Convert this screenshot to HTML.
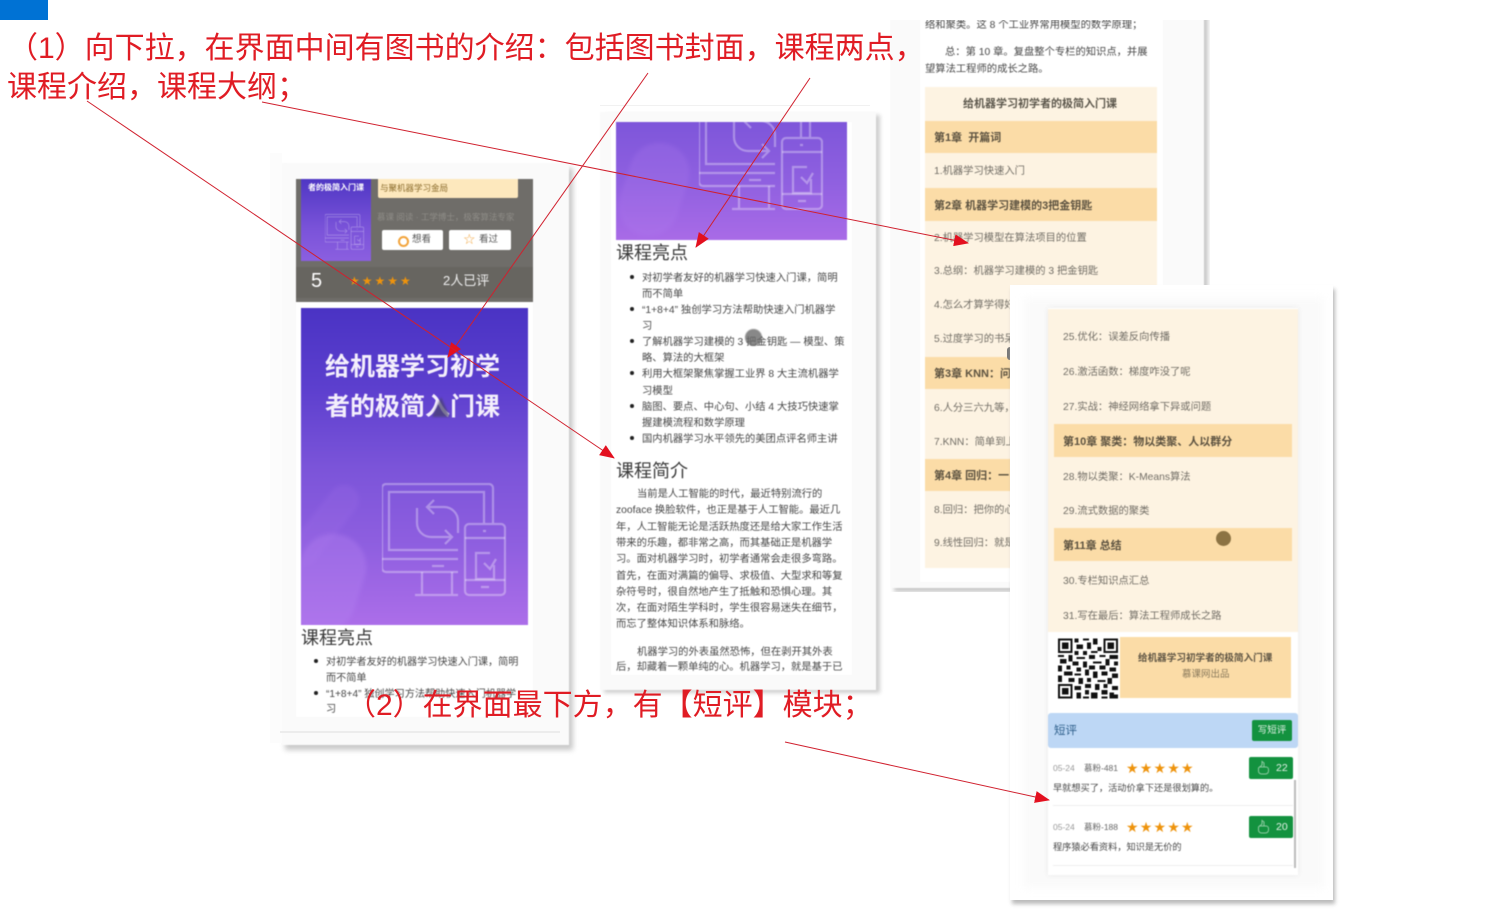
<!DOCTYPE html>
<html lang="zh-CN"><head><meta charset="utf-8"><title>课程介绍</title>
<style>
html,body{margin:0;padding:0;background:#fff}
body{width:1498px;height:917px;position:relative;overflow:hidden;font-family:"Liberation Sans","Noto Sans CJK SC",sans-serif;color:#444}
.a{position:absolute}
.t{position:absolute;white-space:nowrap;font-size:10.3px;line-height:16px;color:#484848}
.h{position:absolute;white-space:nowrap;font-size:18px;line-height:24px;color:#3a3a3a}
.b{position:absolute;width:4px;height:4px;border-radius:50%;background:#222}
.red{position:absolute;white-space:nowrap;font-size:30px;line-height:39px;color:#e01c24;font-family:"Liberation Sans","Noto Sans CJK SC",sans-serif;z-index:20}
.card{position:absolute;background:#fafafa;filter:blur(.5px)}
.s2 .t{margin-top:2px}
.row{position:absolute;height:16px;white-space:nowrap;font-size:10.3px;line-height:16px;color:#726e66}
.ch{position:absolute;background:#fbdca7;white-space:nowrap;font-size:11px;font-weight:700;color:#5c5240}
.c4row .row{margin-top:2px}
.star{position:absolute;white-space:nowrap;color:#ee930c;font-family:"DejaVu Sans",sans-serif;line-height:14px}
</style></head><body>
<svg width="0" height="0" style="position:absolute"><defs>
<symbol id="dev" viewBox="0 0 124 114" overflow="visible"><g fill="none" stroke="#fff" stroke-width="2.2" stroke-opacity=".33">
<path d="M111 40V5a4 4 0 0 0-4-4H4a4 4 0 0 0-4 4V85a4 4 0 0 0 4 4H76"/>
<path d="M102 40V9H7V67H76"/><path d="M0 76H76"/><path d="M50 83H62"/><path d="M40 89V112M70 89V112M33 112H76"/>
<rect x="83" y="41" width="40" height="71" rx="4"/><path d="M83 55H123M83 97H123M99 104H107M101 48H104"/>
<path d="M108 70H94V96H112V82M102 80L108 86L114 76"/>
<path d="M45 24H62a14 14 0 0 1 14 14V50M52 17L45 24L52 31"/><path d="M35 25V40a14 14 0 0 0 14 14H70M63 47L70 54L63 61"/>
</g></symbol></defs></svg>

<div class="a" style="left:0;top:0;width:48px;height:20px;background:#0072d4"></div>

<!-- card 1 -->
<div class="card" style="left:281px;top:163px;width:288px;height:582px;box-shadow:4px 5px 5px #c9c9c9"></div>
<div class="a" style="left:270px;top:153px;width:12px;height:590px;background:#fcfcfc"></div>
<div class="a" style="left:280px;top:731px;width:280px;height:2px;background:#ececec"></div>
<div class="card" style="left:296px;top:179px;width:237px;height:538px;background:#fff">
 <div class="a" style="left:0;top:0;width:237px;height:123px;background:#6f6d69"></div>
 <div class="a" style="left:5px;top:0;width:70px;height:82px;background:linear-gradient(#4f37c4,#7a53d9 60%,#8b5fe0)">
  <svg class="a" style="left:24px;top:34px" width="39" height="38"><use href="#dev" width="39" height="38"/></svg>
  <div class="t" style="left:7px;top:1px;font-size:8px;font-weight:700;color:#fff">者的极简入门课</div></div>
 <div class="a" style="left:82px;top:0;width:140px;height:19px;background:#fde8bd;border-radius:0 0 2px 2px"></div>
 <div class="t" style="left:84px;top:1px;font-size:8.5px;color:#8c6d2e">与聚机器学习金局</div>
 <div class="t" style="left:81px;top:30px;font-size:8.5px;color:#8e8c87">慕课 阅读 · 工学博士，极客算法专家</div>
 <div class="a" style="left:86px;top:51px;width:61px;height:20px;background:#fff;border-radius:2px"></div>
 <div class="a" style="left:153px;top:51px;width:62px;height:20px;background:#fff;border-radius:2px"></div>
 <div class="a" style="left:102px;top:57px;width:7px;height:7px;border:2px solid #f2a33a;border-radius:50%"></div>
 <div class="t" style="left:116px;top:53px;font-size:9.5px;color:#555">想看</div>
 <div class="star" style="left:167px;top:54px;font-size:14px;color:#f2a33a">☆</div>
 <div class="t" style="left:183px;top:53px;font-size:9.5px;color:#555">看过</div>
 <div class="a" style="left:0;top:88px;width:237px;height:31px;background:#676560"></div>
 <div class="t" style="left:15px;top:90px;font-size:20px;line-height:24px;color:#fff">5</div>
 <div class="star" style="left:53px;top:95px;font-size:12px;letter-spacing:2px">★★★★★</div>
 <div class="t" style="left:147px;top:94px;font-size:13px;color:#eee">2人已评</div>
 <div class="a" style="left:5px;top:129px;width:227px;height:317px;background:linear-gradient(#4a33c4 0,#5c3fce 25%,#7b54d9 50%,#8f5fe0 75%,#ac6ee9 100%);overflow:hidden">
  <div class="a" style="left:-6px;top:225px;width:66px;height:100px;border-radius:33px;background:#b27ff0;opacity:.4;transform:rotate(18deg);filter:blur(2px)"></div>
  <div class="a" style="left:8px;top:170px;width:30px;height:95px;border-radius:15px;background:#b27ff0;opacity:.14;transform:rotate(38deg);filter:blur(2px)"></div>
  <svg class="a" style="left:81px;top:175px" width="124" height="114"><use href="#dev" width="124" height="114"/></svg>
 </div>
 <div class="t" style="left:29px;top:168px;font-size:25px;line-height:40px;font-weight:700;color:#f4effc">给机器学习初学<br>者的极简入门课</div>
 <div class="h" style="left:5px;top:447px">课程亮点</div>
 <div class="b" style="left:18px;top:480px"></div>
 <div class="t" style="left:30px;top:476px;font-size:10.15px">对初学者友好的机器学习快速入门课，简明</div>
 <div class="t" style="left:30px;top:492px;font-size:10.15px">而不简单</div>
 <div class="b" style="left:18px;top:512px"></div>
 <div class="t" style="left:30px;top:508px;font-size:10.15px">“1+8+4” 独创学习方法帮助快速入门机器学</div>
 <div class="t" style="left:30px;top:523px;font-size:10.15px">习</div>
</div>
<div class="a" style="left:432px;top:397px;width:0;height:0;border-left:9px solid transparent;border-right:9px solid transparent;border-bottom:20px solid #45406a;opacity:.7;filter:blur(1px)"></div>

<!-- card 2 -->
<div class="a" style="left:600px;top:105px;width:270px;height:1px;background:#f1f1f1"></div>
<div class="card" style="left:600px;top:112px;width:276px;height:578px;box-shadow:4px 3px 4px #cfcfcf"></div>
<div class="card s2" style="left:611px;top:122px;width:241px;height:553px;background:#fff">
 <div class="a" style="left:5px;top:0;width:231px;height:118px;background:linear-gradient(#7e56da,#8f60e0 50%,#a96be7);overflow:hidden">
  <div class="a" style="left:8px;top:20px;width:60px;height:95px;border-radius:30px;background:#b27ff0;opacity:.22;transform:rotate(18deg);filter:blur(2px)"></div>
  <svg class="a" style="left:83px;top:-25px" width="124" height="114"><use href="#dev" width="124" height="114"/></svg>
 </div>
 <div class="h" style="left:5px;top:119px">课程亮点</div>
 <div class="b" style="left:19px;top:153px"></div><div class="t" style="left:31px;top:147px">对初学者友好的机器学习快速入门课，简明</div>
 <div class="t" style="left:31px;top:163px">而不简单</div>
 <div class="b" style="left:19px;top:185px"></div><div class="t" style="left:31px;top:179px">“1+8+4” 独创学习方法帮助快速入门机器学</div>
 <div class="t" style="left:31px;top:195px">习</div>
 <div class="b" style="left:19px;top:217px"></div><div class="t" style="left:31px;top:211px">了解机器学习建模的 3 把金钥匙 — 模型、策</div>
 <div class="t" style="left:31px;top:227px">略、算法的大框架</div>
 <div class="b" style="left:19px;top:249px"></div><div class="t" style="left:31px;top:243px">利用大框架聚焦掌握工业界 8 大主流机器学</div>
 <div class="t" style="left:31px;top:260px">习模型</div>
 <div class="b" style="left:19px;top:282px"></div><div class="t" style="left:31px;top:276px">脑图、要点、中心句、小结 4 大技巧快速掌</div>
 <div class="t" style="left:31px;top:292px">握建模流程和数学原理</div>
 <div class="b" style="left:19px;top:314px"></div><div class="t" style="left:31px;top:308px">国内机器学习水平领先的美团点评名师主讲</div>
 <div class="h" style="left:5px;top:337px">课程简介</div>
 <div class="t" style="left:26px;top:363px">当前是人工智能的时代，最近特别流行的</div>
 <div class="t" style="left:5px;top:379px">zooface 换脸软件，也正是基于人工智能。最近几</div>
 <div class="t" style="left:5px;top:396px">年，人工智能无论是活跃热度还是给大家工作生活</div>
 <div class="t" style="left:5px;top:412px">带来的乐趣，都非常之高，而其基础正是机器学</div>
 <div class="t" style="left:5px;top:428px">习。面对机器学习时，初学者通常会走很多弯路。</div>
 <div class="t" style="left:5px;top:445px">首先，在面对满篇的偏导、求极值、大型求和等复</div>
 <div class="t" style="left:5px;top:461px">杂符号时，很自然地产生了抵触和恐惧心理。其</div>
 <div class="t" style="left:5px;top:477px">次，在面对陌生学科时，学生很容易迷失在细节，</div>
 <div class="t" style="left:5px;top:493px">而忘了整体知识体系和脉络。</div>
 <div class="t" style="left:26px;top:521px">机器学习的外表虽然恐怖，但在剥开其外表</div>
 <div class="t" style="left:5px;top:536px">后，却藏着一颗单纯的心。机器学习，就是基于已</div>
</div>
<div class="a" style="left:745px;top:329px;width:17px;height:17px;border-radius:50%;background:#6b6b6b;opacity:.8;filter:blur(.7px)"></div>

<!-- card 3 -->
<div class="a" style="left:890px;top:20px;width:320px;height:572px;overflow:hidden">
 <div class="card" style="left:0;top:-20px;width:314px;height:588px;box-shadow:4px 4px 4px #c9c9c9"></div>
 <div class="card" style="left:30px;top:-20px;width:243px;height:582px;background:#fff">
  <div class="t" style="left:5px;top:18px">络和聚类。这 8 个工业界常用模型的数学原理；</div>
  <div class="t" style="left:25px;top:45px">总：第 10 章。复盘整个专栏的知识点，并展</div>
  <div class="t" style="left:5px;top:62px">望算法工程师的成长之路。</div>
  <div class="a" style="left:5px;top:87px;width:232px;height:481px;background:#fdf3e2"></div>
  <div class="t" style="left:43px;top:95px;font-size:11px;line-height:18px;font-weight:700;color:#5c574c">给机器学习初学者的极简入门课</div>
  <div class="ch" style="left:5px;top:121px;width:223px;height:32px;line-height:35px;padding-left:9px">第1章&nbsp; 开篇词</div>
  <div class="row" style="left:14px;top:164px">1.机器学习快速入门</div>
  <div class="ch" style="left:5px;top:188px;width:223px;height:33px;line-height:36px;padding-left:9px">第2章 机器学习建模的3把金钥匙</div>
  <div class="row" style="left:14px;top:231px">2.机器学习模型在算法项目的位置</div>
  <div class="row" style="left:14px;top:264px">3.总纲：机器学习建模的 3 把金钥匙</div>
  <div class="row" style="left:14px;top:298px">4.怎么才算学得好</div>
  <div class="row" style="left:14px;top:332px">5.过度学习的书呆子</div>
  <div class="ch" style="left:5px;top:357px;width:223px;height:32px;line-height:35px;padding-left:9px">第3章 KNN：问</div>
  <div class="row" style="left:14px;top:401px">6.人分三六九等，</div>
  <div class="row" style="left:14px;top:435px">7.KNN：简单到上</div>
  <div class="ch" style="left:5px;top:459px;width:223px;height:32px;line-height:35px;padding-left:9px">第4章 回归：一</div>
  <div class="row" style="left:14px;top:503px">8.回归：把你的心</div>
  <div class="row" style="left:14px;top:536px">9.线性回归：就是</div>
 </div>
</div>
<div class="a" style="left:1007px;top:347px;width:3px;height:13px;background:#777;border-radius:3px 0 0 3px"></div>

<!-- card 4 -->
<div class="a" style="left:1010px;top:285px;width:323px;height:615px;background:#fff;box-shadow:2px 4px 4px #bbb;z-index:5"></div>
<div class="a" style="left:1024px;top:298px;width:300px;height:590px;background:#fafafa;filter:blur(4px);z-index:5"></div>
<div class="card c4row" style="left:1048px;top:308px;width:250px;height:567px;background:#fff;z-index:6;box-shadow:0 0 5px #e8e8e8">
 <div class="a" style="left:0;top:1px;width:250px;height:323px;background:#fdf3e2"></div>
 <div class="row" style="left:15px;top:20px">25.优化：误差反向传播</div>
 <div class="row" style="left:15px;top:55px">26.激活函数：梯度咋没了呢</div>
 <div class="row" style="left:15px;top:90px">27.实战：神经网络拿下异或问题</div>
 <div class="ch" style="left:6px;top:116px;width:229px;height:33px;line-height:36px;padding-left:9px">第10章 聚类：物以类聚、人以群分</div>
 <div class="row" style="left:15px;top:160px">28.物以类聚：K-Means算法</div>
 <div class="row" style="left:15px;top:194px">29.流式数据的聚类</div>
 <div class="ch" style="left:6px;top:220px;width:229px;height:33px;line-height:36px;padding-left:9px">第11章 总结</div>
 <div class="a" style="left:168px;top:223px;width:15px;height:15px;border-radius:50%;background:#8c7343"></div>
 <div class="row" style="left:15px;top:264px">30.专栏知识点汇总</div>
 <div class="row" style="left:15px;top:299px">31.写在最后：算法工程师成长之路</div>

 <svg class="a" style="left:10px;top:330px" width="60" height="61" viewBox="0 0 29 29" shape-rendering="crispEdges"><path fill="#111" d="M0 0h7v7H0zM22 0h7v7h-7zM0 22h7v7H0z"/><path fill="#fff" d="M1 1h5v5H1zM23 1h5v5h-5zM1 23h5v5H1z"/><path fill="#111" d="M2 2h3v3H2zM24 2h3v3h-3zM2 24h3v3H2zM8 0h2v2H8zM12 0h3v1h-3zM17 0h2v3h-2zM9 3h3v2H9zM14 2h2v3h-2zM19 4h2v2h-2zM8 6h2v2H8zM12 6h2v2h-2zM16 6h3v1h-3zM0 8h3v1H0zM5 8h2v3H5zM9 9h4v1H9zM15 8h3v2h-3zM20 8h3v1h-3zM25 8h4v2h-4zM1 10h3v2H1zM7 11h3v2H7zM12 11h2v3h-2zM17 11h4v1h-4zM23 10h2v3h-2zM27 11h2v2h-2zM0 13h2v3H0zM4 13h2v2H4zM9 14h2v2H9zM15 13h3v2h-3zM20 13h3v2h-3zM25 14h3v2h-3zM3 16h4v2H3zM8 17h3v1H8zM13 15h2v3h-2zM17 16h2v3h-2zM21 16h3v2h-3zM26 17h3v2h-3zM0 18h2v3H0zM5 19h3v2H5zM10 19h2v3h-2zM14 19h2v2h-2zM19 20h4v1h-4zM24 19h2v3h-2zM8 23h3v2H8zM13 22h3v2h-3zM18 22h2v3h-2zM22 22h2v2h-2zM26 23h3v2h-3zM9 26h2v3H9zM13 25h2v2h-2zM16 26h3v3h-3zM21 25h3v2h-3zM25 26h2v3h-2zM12 28h3v1h-3zM21 28h3v1h-3zM27 27h2v2h-2z"/></svg>
 <div class="a" style="left:72px;top:329px;width:171px;height:61px;background:#fbdca7"></div>
 <div class="t" style="left:90px;top:343px;font-size:9.6px;font-weight:700;color:#5f5544">给机器学习初学者的极简入门课</div>
 <div class="t" style="left:134px;top:359px;font-size:9.5px;color:#8a7a5c">慕课网出品</div>
 <div class="a" style="left:0;top:405px;width:250px;height:35px;background:#bdd7f5;border-radius:3px"></div>
 <div class="t" style="left:6px;top:415px;font-size:11.5px;color:#2f608c">短评</div>
 <div class="a" style="left:204px;top:412px;width:40px;height:21px;background:#13923f;border-radius:2px;color:#e4f2e8;font-size:9.5px;line-height:21px;text-align:center">写短评</div>

 <div class="t" style="left:5px;top:452px;font-size:8.5px;color:#999">05-24</div>
 <div class="t" style="left:36px;top:452px;font-size:8.5px;color:#666">慕粉-481</div>
 <div class="star" style="left:78px;top:454px;font-size:14px;letter-spacing:1.2px">★★★★★</div>
 <div class="a" style="left:201px;top:449px;width:44px;height:22px;background:#13923f;border-radius:2px"></div>
 <svg class="a" style="left:209px;top:452px" width="13" height="15" viewBox="0 0 13 15" fill="none" stroke="#8ccaa0" stroke-width="1"><path d="M2 7H9A2.500 2.500 0 0 1 11.500 9.500V11A3 3 0 0 1 8.500 14H4.500A3 3 0 0 1 1.500 11V8L5 5V1.500L7 3V7"/></svg>
 <div class="t" style="left:228px;top:452px;font-size:10.5px;color:#e4f2e8">22</div>
 <div class="t" style="left:5px;top:472px;font-size:9.2px;color:#484848">早就想买了，活动价拿下还是很划算的。</div>
 <div class="a" style="left:5px;top:497px;width:240px;height:1px;background:#eee"></div>

 <div class="t" style="left:5px;top:511px;font-size:8.5px;color:#999">05-24</div>
 <div class="t" style="left:36px;top:511px;font-size:8.5px;color:#666">慕粉-188</div>
 <div class="star" style="left:78px;top:513px;font-size:14px;letter-spacing:1.2px">★★★★★</div>
 <div class="a" style="left:201px;top:508px;width:44px;height:22px;background:#13923f;border-radius:2px"></div>
 <svg class="a" style="left:209px;top:511px" width="13" height="15" viewBox="0 0 13 15" fill="none" stroke="#8ccaa0" stroke-width="1"><path d="M2 7H9A2.500 2.500 0 0 1 11.500 9.500V11A3 3 0 0 1 8.500 14H4.500A3 3 0 0 1 1.500 11V8L5 5V1.500L7 3V7"/></svg>
 <div class="t" style="left:228px;top:511px;font-size:10.5px;color:#e4f2e8">20</div>
 <div class="t" style="left:5px;top:531px;font-size:9.2px;color:#484848">程序猿必看资料，知识是无价的</div>
 <div class="a" style="left:5px;top:557px;width:240px;height:1px;background:#eee"></div>
 <div class="a" style="left:246px;top:472px;width:2px;height:88px;background:#bbb"></div>
</div>

<!-- annotations -->
<div class="red" style="left:8px;top:29px">（1）向下拉，在界面中间有图书的介绍：包括图书封面，课程两点，</div>
<div class="red" style="left:7px;top:68px">课程介绍，课程大纲；</div>
<div class="red" style="left:346px;top:686px">（2）在界面最下方，有【短评】模块；</div>

<svg class="a" style="left:0;top:0;z-index:21" width="1498" height="917" viewBox="0 0 1498 917">
<defs><marker id="m" markerUnits="userSpaceOnUse" markerWidth="15" markerHeight="12" refX="14" refY="6" orient="auto"><path d="M0 0L15 6L0 12z" fill="#e3101f"/></marker></defs>
<g stroke="#d0202e" stroke-width="1" fill="none">
<path d="M648 73L448 357" marker-end="url(#m)"/>
<path d="M810 78L696 247" marker-end="url(#m)"/>
<path d="M87 101L614 458" marker-end="url(#m)"/>
<path d="M262 102L968 243" marker-end="url(#m)"/>
<path d="M785 742L1049 800" marker-end="url(#m)"/>
</g></svg>
</body></html>
